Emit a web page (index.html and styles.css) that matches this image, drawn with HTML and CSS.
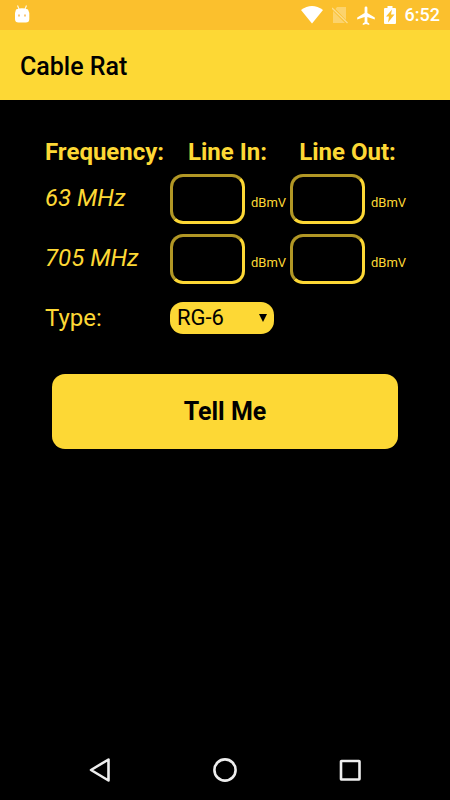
FILE: index.html
```html
<!DOCTYPE html>
<html lang="en">
<head>
<meta charset="utf-8">
<meta name="viewport" content="width=device-width, initial-scale=1">
<title>Cable Rat</title>
<link rel="stylesheet" href="styles.css">
</head>
<body>
<div class="status">
  <svg class="status-app" width="16" height="20" viewBox="0 0 16 20" aria-hidden="true">
    <path d="M3.500.500 5 4M12.500.500 11 4" stroke="#fff" stroke-width="1.200" opacity=".85"/>
    <path d="M2 4.500Q8 2 14 4.500L15.300 8v6q0 3.500-3.500 3.500H4.500Q1 17.500 1 14V8z" fill="#fff"/>
    <path d="M4 9.500h2v2H4zM10 9.500h2v2h-2z" fill="#fbc878"/>
  </svg>
  <div class="status-icons">
    <svg width="22" height="18" viewBox="0 0 22 18" aria-hidden="true"><path d="M0 4Q11-4 22 4L11 17.500z" fill="#fff"/></svg>
    <svg width="16" height="18" viewBox="1 0 16 18" aria-hidden="true"><path d="M6 1h9v13L4.500 3zM2 5l12 12H2z" fill="#fff" opacity=".3"/><path d="M1 2 16.500 17" stroke="#fff" stroke-width="1.300" opacity=".45"/></svg>
    <svg width="18" height="19" viewBox="2 1.500 19 20.500" aria-hidden="true"><path d="M21 16v-2l-8-5V3.500a1.500 1.500 0 0 0-3 0V9l-8 5v2l8-2.500V19l-2 1.500V22l3.500-1 3.500 1v-1.500L13 19v-5.500z" fill="#fff"/></svg>
    <svg width="12" height="18" viewBox="0 0 12 18" aria-hidden="true"><path d="M3.500 0h5v2H11q1 0 1 1v14q0 1-1 1H1q-1 0-1-1V3q0-1 1-1h2.500z" fill="#fff"/><path d="M8 3.500 2 10.500h3L4 16.500l6.500-8H7z" fill="#fbc02d"/></svg>
    <span class="clock">6:52</span>
  </div>
</div>
<header class="app-bar"><h1>Cable Rat</h1></header>
<main>
  <form>
    <table class="levels">
      <thead>
        <tr><th class="col-frequency" scope="col">Frequency:</th><th class="col-in" scope="col">Line In:</th><th scope="col">Line Out:</th></tr>
      </thead>
      <tbody>
        <tr>
          <th scope="row">63 MHz</th>
          <td><input id="in-63" type="text" inputmode="decimal" aria-label="63 MHz line in"><label for="in-63">dBmV</label></td>
          <td><input id="out-63" type="text" inputmode="decimal" aria-label="63 MHz line out"><label for="out-63">dBmV</label></td>
        </tr>
        <tr>
          <th scope="row">705 MHz</th>
          <td><input id="in-705" type="text" inputmode="decimal" aria-label="705 MHz line in"><label for="in-705">dBmV</label></td>
          <td><input id="out-705" type="text" inputmode="decimal" aria-label="705 MHz line out"><label for="out-705">dBmV</label></td>
        </tr>
      </tbody>
    </table>
    <div class="type-row">
      <label for="type">Type:</label>
      <div class="select">
        <select id="type"><option>RG-6</option></select>
        <svg class="arrow" width="8" height="8" viewBox="0 0 8 8" aria-hidden="true"><path d="M0 0h8L4 8z"/></svg>
      </div>
    </div>
    <button class="submit" type="button">Tell Me</button>
  </form>
</main>
<nav class="system-nav">
  <button type="button" aria-label="Back"><svg width="26" height="26" viewBox="0 0 26 26"><path d="M21.500 2.500v21L4 13z"/></svg></button>
  <button type="button" aria-label="Home"><svg width="26" height="26" viewBox="0 0 26 26"><circle cx="13" cy="13" r="10.600"/></svg></button>
  <button type="button" aria-label="Recent apps"><svg width="26" height="26" viewBox="0 0 26 26"><rect x="4" y="4" width="18.500" height="18.500" rx=".5"/></svg></button>
</nav>
</body>
</html>
```
FILE: styles.css
```css
* {
  box-sizing: border-box;
}

body {
  margin: 0;
  min-height: 100vh;
  display: flex;
  flex-direction: column;
  background: #000;
  color: #fdd835;
  font: 24px/28px Roboto, sans-serif;
}

.status {
  height: 30px;
  padding: 0 10px 0 14px;
  display: flex;
  align-items: center;
  justify-content: space-between;
  background: #fbc02d;
  color: #fff;
}

.status-icons {
  display: flex;
  align-items: center;
  gap: 9px;
}

.clock {
  font-size: 18px;
  font-weight: 500;
  line-height: 30px;
}

.app-bar {
  height: 70px;
  padding: 4px 20px 0;
  display: flex;
  align-items: center;
  background: #fdd835;
  color: #000;
}

h1 {
  margin: 0;
  font-size: 25px;
  font-weight: 500;
}

main {
  flex: 1;
  padding: 35px 45px;
}

.levels {
  width: 100%;
  table-layout: fixed;
  border-collapse: collapse;
}

.levels th,
.levels td {
  padding: 0;
  white-space: nowrap;
}

.levels thead th {
  height: 34px;
}

.levels .col-frequency {
  width: 125px;
  text-align: left;
}

.levels .col-in {
  width: 120px;
  padding-right: 5px;
}

.levels tbody tr {
  height: 60px;
}

.levels tbody th {
  padding-bottom: 2px;
  font-weight: 400;
  font-style: italic;
  text-align: left;
}

.levels input {
  width: 75px;
  height: 50px;
  margin: 0 6px 0 0;
  padding: 0 8px;
  border: 3px solid;
  border-color: #b19725 #fdd835 #fdd835 #b19725;
  border-radius: 13px;
  background: #000;
  color: inherit;
  font: inherit;
}

.levels td label {
  font-size: 13px;
}

.type-row {
  height: 58px;
  display: grid;
  grid-template-columns: 125px 104px;
  align-items: center;
}

.select {
  position: relative;
}

.select select {
  display: block;
  width: 100%;
  height: 32px;
  padding: 0 7px;
  border: 0;
  border-radius: 13px;
  appearance: none;
  background: #fdd835;
  color: #000;
  font: 22px/28px Roboto, sans-serif;
}

.arrow {
  position: absolute;
  top: 12px;
  right: 7px;
  pointer-events: none;
}

.submit {
  display: block;
  width: calc(100% - 14px);
  height: 75px;
  margin: 27px auto 0;
  border: 0;
  border-radius: 13px;
  background: #fdd835;
  color: #000;
  font: 700 25px/28px Roboto, sans-serif;
}

.system-nav {
  height: 60px;
  padding: 0 37px;
  display: flex;
}

.system-nav button {
  flex: 1;
  padding: 0;
  display: flex;
  align-items: center;
  justify-content: center;
  border: 0;
  background: none;
}

.system-nav svg {
  fill: none;
  stroke: #eee;
  stroke-width: 2.6;
  stroke-linejoin: round;
}
```
